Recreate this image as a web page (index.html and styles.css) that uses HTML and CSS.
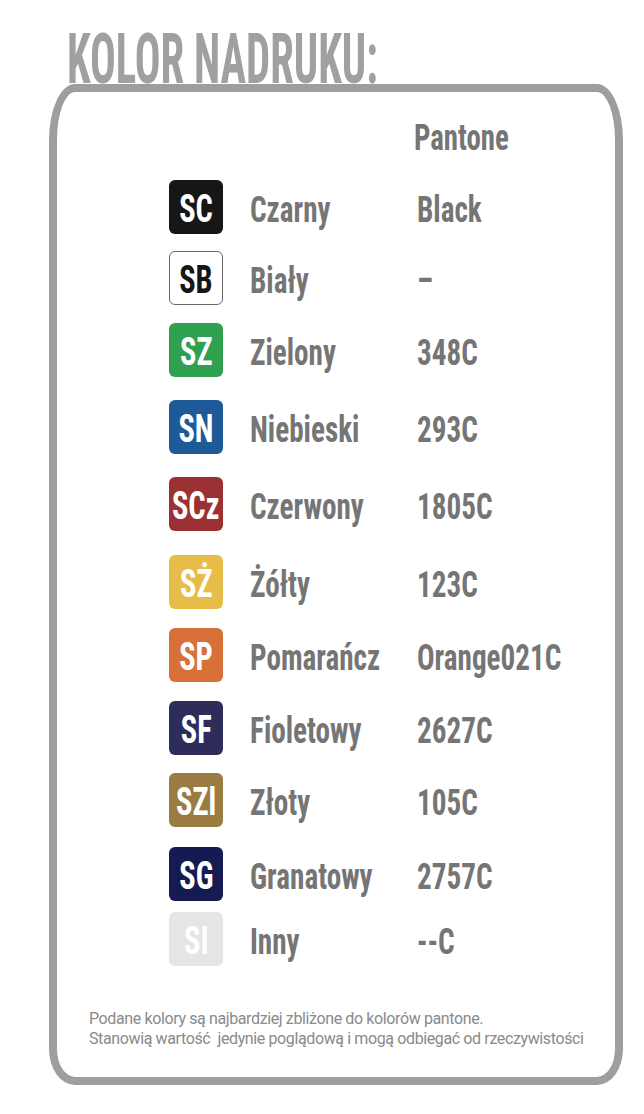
FILE: index.html
```html
<!DOCTYPE html>
<html lang="pl">
<head>
<meta charset="utf-8">
<title>Kolor nadruku</title>
<link rel="stylesheet" href="styles.css">
</head>
<body>
<h1 class="title"><span class="title-text">KOLOR NADRUKU:</span></h1>
<div class="frame">
  <div class="head"><span class="txt">Pantone</span></div>
  <ul class="list">
    <li class="row"><span class="badge sc"><span class="btxt">SC</span></span><span class="label"><span class="txt">Czarny</span></span><span class="code"><span class="txt">Black</span></span></li>
    <li class="row"><span class="badge sb"><span class="btxt">SB</span></span><span class="label"><span class="txt">Biały</span></span><span class="code"><span class="txt dash">–</span></span></li>
    <li class="row"><span class="badge sz"><span class="btxt">SZ</span></span><span class="label"><span class="txt">Zielony</span></span><span class="code"><span class="txt">348C</span></span></li>
    <li class="row"><span class="badge sn"><span class="btxt">SN</span></span><span class="label"><span class="txt">Niebieski</span></span><span class="code"><span class="txt">293C</span></span></li>
    <li class="row"><span class="badge scz"><span class="btxt">SCz</span></span><span class="label"><span class="txt">Czerwony</span></span><span class="code"><span class="txt">1805C</span></span></li>
    <li class="row"><span class="badge szo"><span class="btxt">SŻ</span></span><span class="label"><span class="txt">Żółty</span></span><span class="code"><span class="txt">123C</span></span></li>
    <li class="row"><span class="badge sp"><span class="btxt">SP</span></span><span class="label"><span class="txt">Pomarańcz</span></span><span class="code"><span class="txt">Orange021C</span></span></li>
    <li class="row"><span class="badge sf"><span class="btxt">SF</span></span><span class="label"><span class="txt">Fioletowy</span></span><span class="code"><span class="txt">2627C</span></span></li>
    <li class="row"><span class="badge szl"><span class="btxt">SZl</span></span><span class="label"><span class="txt">Złoty</span></span><span class="code"><span class="txt">105C</span></span></li>
    <li class="row"><span class="badge sg"><span class="btxt">SG</span></span><span class="label"><span class="txt">Granatowy</span></span><span class="code"><span class="txt">2757C</span></span></li>
    <li class="row"><span class="badge si"><span class="btxt">SI</span></span><span class="label"><span class="txt">Inny</span></span><span class="code"><span class="txt">--C</span></span></li>
  </ul>
  <p class="note">Podane kolory są najbardziej zbliżone do kolorów pantone.<br>Stanowią wartość&nbsp; jedynie poglądową i mogą odbiegać od rzeczywistości</p>
</div>
</body>
</html>
```
FILE: styles.css
```css
html, body {
  margin: 0;
  padding: 0;
  background: #ffffff;
}

body {
  font-family: "Roboto Condensed", "Roboto", "Liberation Sans", sans-serif;
  width: 644px;
}

.title {
  margin: 34px 0 0 67px;
  padding: 0;
  font-size: 70px;
  line-height: 50px;
  font-weight: 700;
  color: #a0a0a0;
  white-space: nowrap;
}

.title-text {
  display: inline-block;
  transform: scaleX(0.61);
  transform-origin: left center;
}

.frame {
  box-sizing: border-box;
  margin-left: 49px;
  width: 574px;
  height: 1001px;
  border: 8px solid #9e9e9e;
  border-radius: 26px / 56px 56px 36px 36px;
  padding: 26px 0 0 0;
}

.txt {
  display: inline-block;
  transform: scaleX(0.81);
  transform-origin: left center;
  white-space: nowrap;
}

.head {
  margin-left: 357px;
  font-size: 37px;
  line-height: 40px;
  font-weight: 700;
  color: #757575;
}

.head .txt {
  transform: scaleX(0.78);
}

.list {
  list-style: none;
  margin: 22px 0 0 0;
  padding: 0 0 0 112px;
}

.row {
  display: flex;
  align-items: center;
  height: 54px;
  font-size: 36px;
  line-height: 40px;
  font-weight: 700;
  color: #757575;
}

.row:nth-child(2) { margin-top: 17px; }
.row:nth-child(3) { margin-top: 18px; }
.row:nth-child(4) { margin-top: 23px; }
.row:nth-child(5) { margin-top: 23px; }
.row:nth-child(6) { margin-top: 24px; }
.row:nth-child(7) { margin-top: 19px; }
.row:nth-child(8) { margin-top: 19px; }
.row:nth-child(9) { margin-top: 18px; }
.row:nth-child(10) { margin-top: 20px; }
.row:nth-child(11) { margin-top: 11px; }

.badge {
  box-sizing: border-box;
  flex: 0 0 54px;
  width: 54px;
  height: 54px;
  border-radius: 6px;
  display: flex;
  align-items: center;
  justify-content: center;
  color: #ffffff;
  font-size: 38px;
  line-height: 40px;
  padding-top: 3px;
  margin-right: 27px;
}

.btxt {
  display: inline-block;
  transform: scaleX(0.8);
  white-space: nowrap;
}

.label {
  width: 167px;
  flex: 0 0 167px;
  padding-top: 6px;
}

.code {
  padding-top: 6px;
}

.sc { background: #161616; }
.sb { background: #ffffff; border: 1px solid #6a6a6a; color: #161616; }
.sz { background: #2ea04f; }
.sn { background: #1e5a98; }
.scz { background: #9c3133; }
.szo { background: #e8bc48; }
.sp { background: #d8703a; }
.sf { background: #2e2c58; }
.szl { background: #9a7c43; }
.sg { background: #151a50; }
.si { background: #e5e5e5; }

.note {
  margin: 43px 0 0 32px;
  font-family: "Roboto", "Liberation Sans", sans-serif;
  font-size: 16px;
  line-height: 20px;
  letter-spacing: -0.38px;
  color: #8a8a8a;
  white-space: nowrap;
}
```
